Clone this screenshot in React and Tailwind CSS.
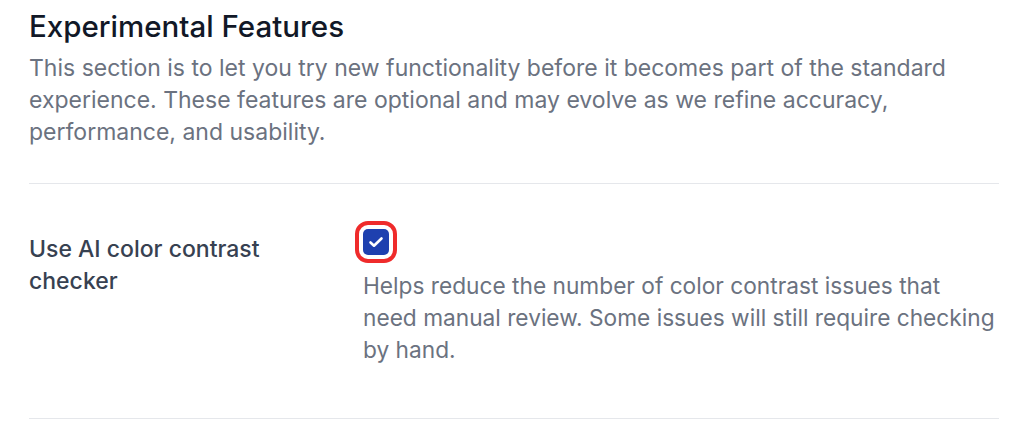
import React, { useState } from 'react';

export default function App() {
  const [enabled, setEnabled] = useState(true);

  return (
    <div className="min-h-screen bg-white font-['Inter',sans-serif] pl-[29px] pr-[25px]">
      {/* Heading */}
      <div className="pt-[8px] pb-[35px] border-b border-[#e5e7eb]">
        <h2 className="text-[29.5px] leading-[36px] font-medium text-[#111827]">Experimental Features</h2>
        <p className="mt-[8px] text-[23px] leading-[32px] text-[#6b7280]">
          This section is to let you try new functionality before it becomes part of the standard
          experience. These features are optional and may evolve as we refine accuracy,
          performance, and usability.
        </p>
      </div>

      {/* Feature row */}
      <div className="grid grid-cols-3 gap-x-8 pt-[45px] pb-[52px] border-b border-[#e5e7eb]">
        <div className="pt-[4px] text-[23px] leading-[32px] font-medium text-[#374151]">
          Use AI color contrast checker
        </div>
        <div className="col-span-2 flex flex-col items-start">
          <button
            type="button"
            onClick={() => setEnabled(!enabled)}
            className="w-[26px] h-[26px] rounded-[5px] bg-[#1e40af] flex items-center justify-center outline-[4px] outline-[#ef2b2b] outline-offset-[4px]"
          >
            {enabled && (
              <svg width="16" height="16" viewBox="0 0 16 16" fill="none">
                <path d="M2.5 8.5l3.5 3.2L13.5 4.5" stroke="white" strokeWidth="2.6" strokeLinecap="round" strokeLinejoin="round" />
              </svg>
            )}
          </button>
          <p className="mt-[15px] -mr-[6px] text-[22.7px] leading-[32px] text-[#6b7280]">
            Helps reduce the number of color contrast issues that
            <br />
            need manual review. Some issues will still require checking
            <br />
            by hand.
          </p>
        </div>
      </div>
    </div>
  );
}
